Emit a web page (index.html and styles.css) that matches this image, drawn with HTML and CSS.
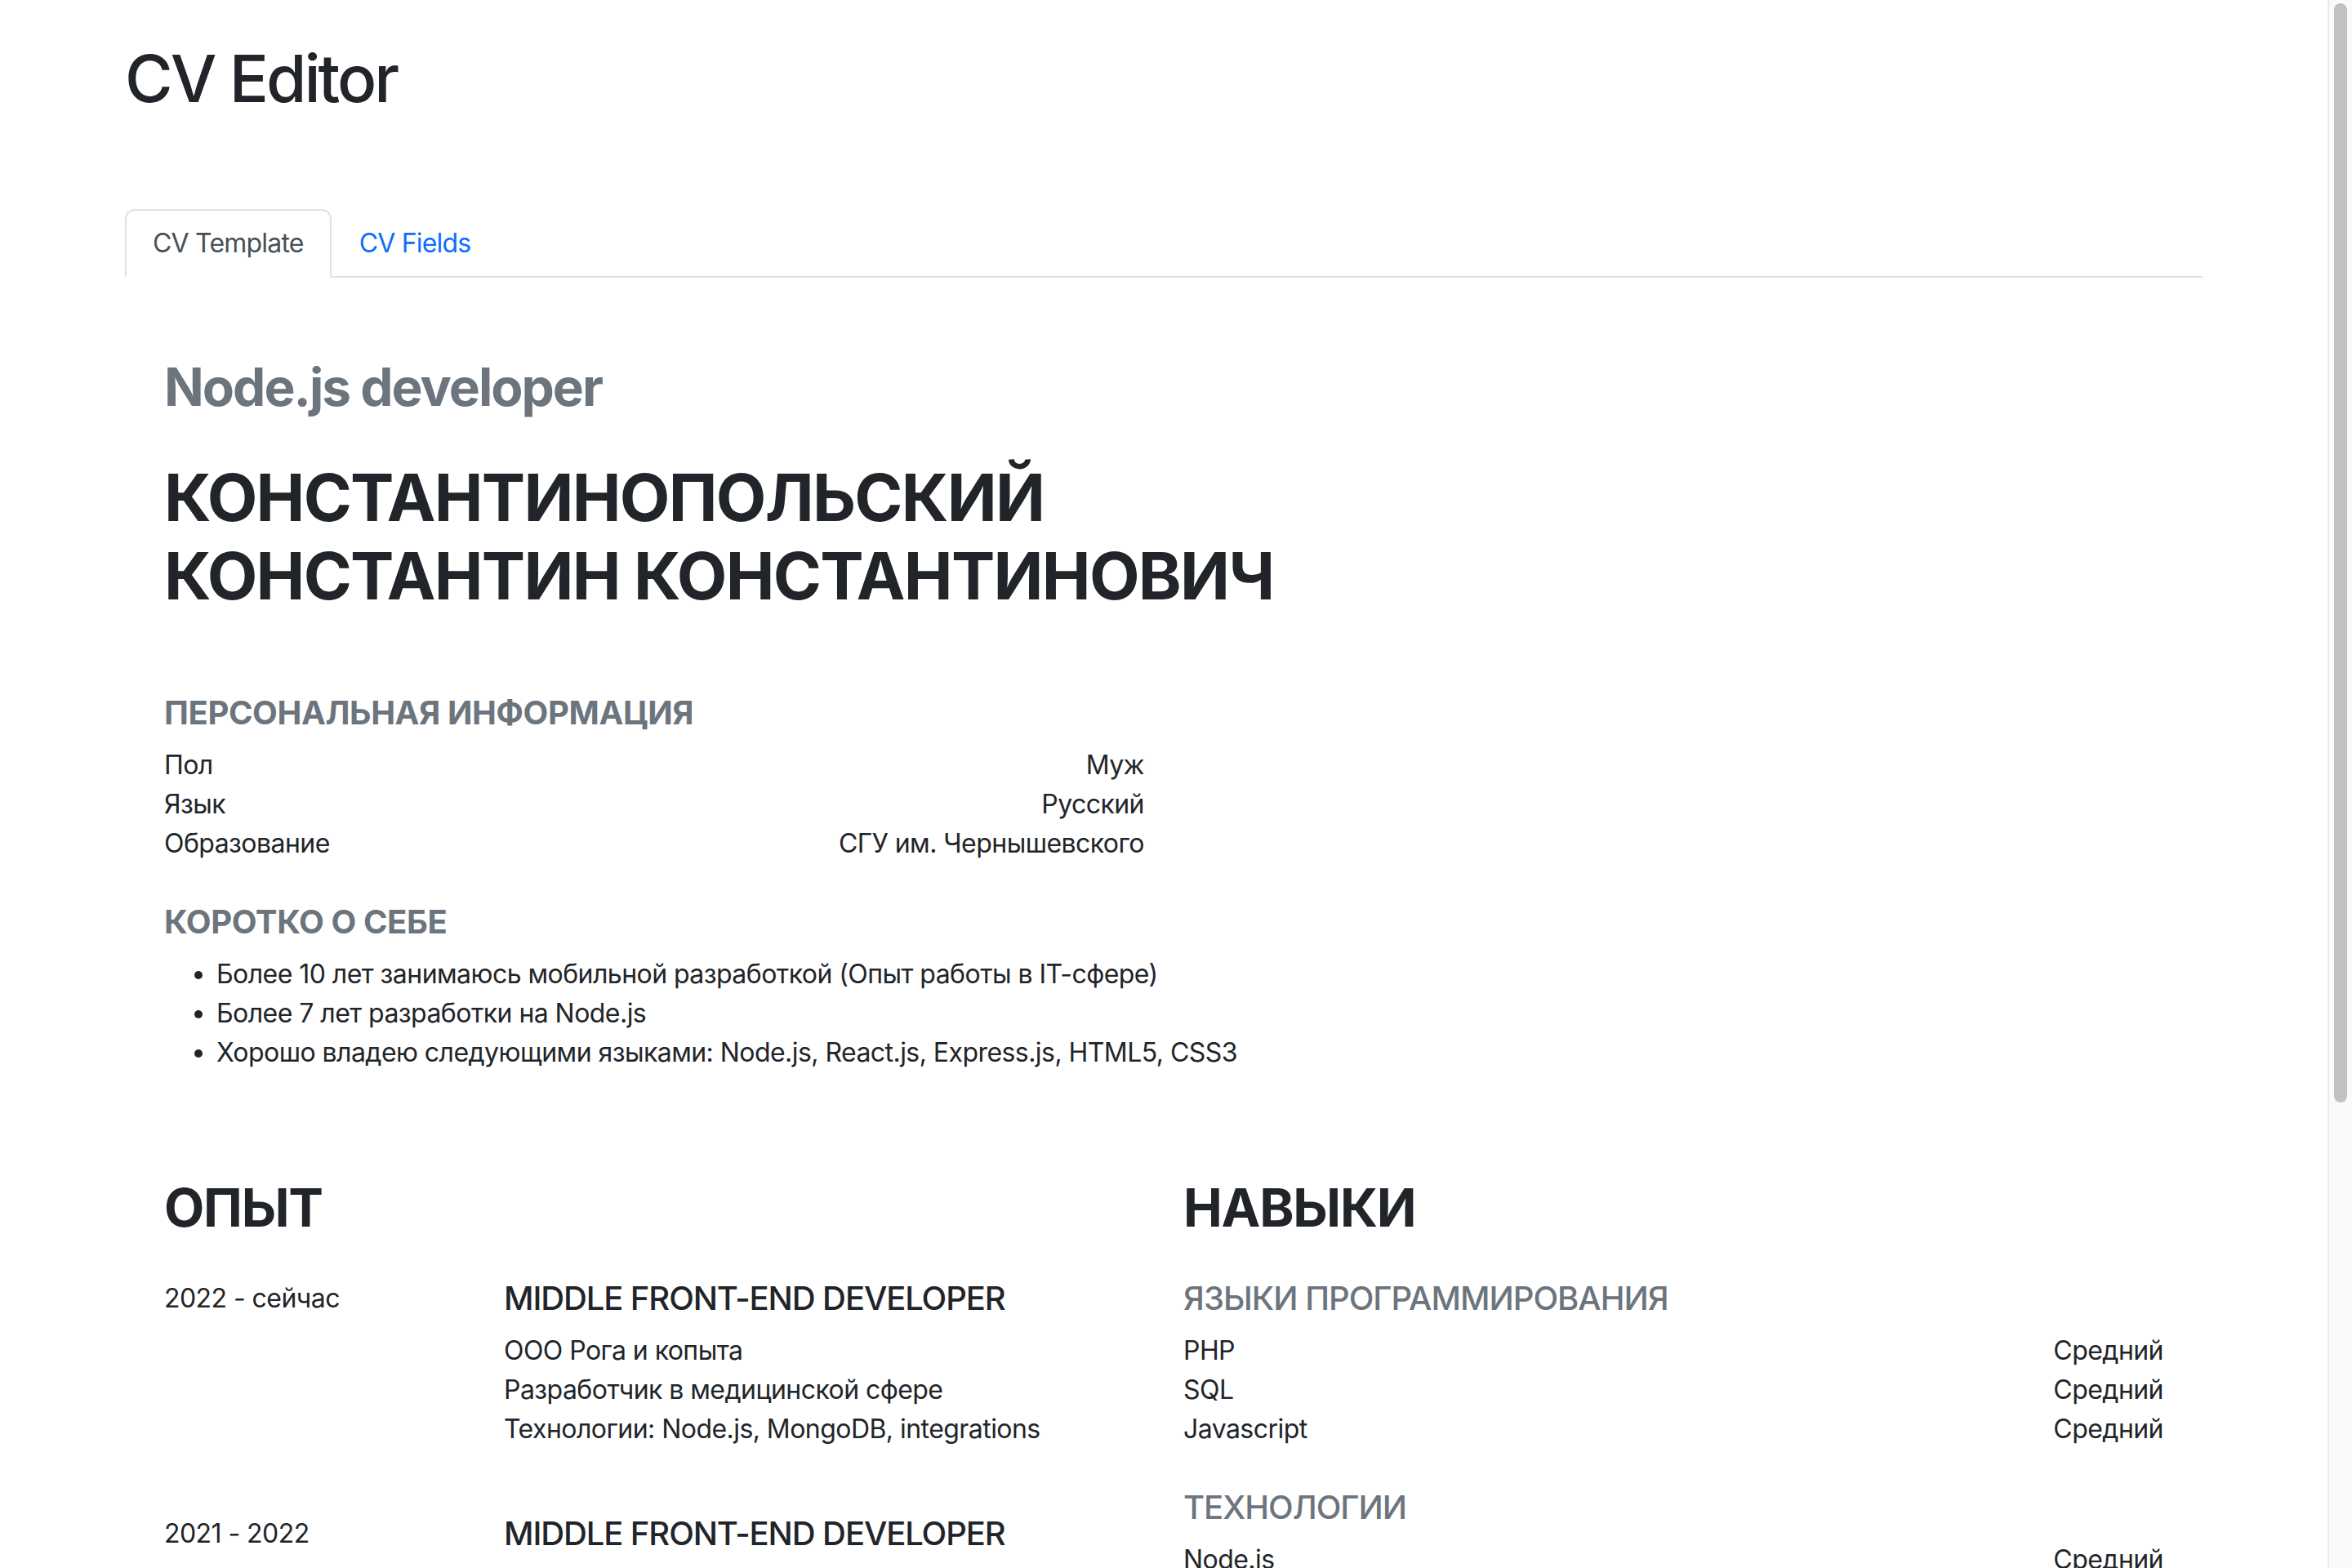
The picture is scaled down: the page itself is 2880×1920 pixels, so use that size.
FILE: index.html
```html
<!DOCTYPE html>
<html lang="ru">
<head>
<meta charset="utf-8">
<title>CV Editor</title>
<link rel="stylesheet" href="styles.css">
</head>
<body>
<div class="container">
  <h1 class="app-title">CV Editor</h1>
  <ul class="nav-tabs">
    <li><a class="nav-link active" href="#">CV Template</a></li>
    <li><a class="nav-link" href="#">CV Fields</a></li>
  </ul>
  <div class="cv">
    <h2 class="cv-position">Node.js developer</h2>
    <h1 class="cv-name">КОНСТАНТИНОПОЛЬСКИЙ<br>КОНСТАНТИН КОНСТАНТИНОВИЧ</h1>

    <section class="cv-block">
      <h5 class="block-title">ПЕРСОНАЛЬНАЯ ИНФОРМАЦИЯ</h5>
      <div class="info-table">
        <div class="info-row"><span>Пол</span><span>Муж</span></div>
        <div class="info-row"><span>Язык</span><span>Русский</span></div>
        <div class="info-row"><span>Образование</span><span>СГУ им. Чернышевского</span></div>
      </div>
    </section>

    <section class="cv-block">
      <h5 class="block-title">КОРОТКО О СЕБЕ</h5>
      <ul class="about-list">
        <li>Более 10 лет занимаюсь мобильной разработкой (Опыт работы в IT-сфере)</li>
        <li>Более 7 лет разработки на Node.js</li>
        <li>Хорошо владею следующими языками: Node.js, React.js, Express.js, HTML5, CSS3</li>
      </ul>
    </section>

    <div class="cv-columns">
      <div class="cv-col">
        <h2 class="col-title">ОПЫТ</h2>
        <div class="job">
          <div class="job-date">2022 - сейчас</div>
          <div class="job-body">
            <h5 class="job-title">MIDDLE FRONT-END DEVELOPER</h5>
            <div class="job-line">ООО Рога и копыта</div>
            <div class="job-line">Разработчик в медицинской сфере</div>
            <div class="job-line">Технологии: Node.js, MongoDB, integrations</div>
          </div>
        </div>
        <div class="job">
          <div class="job-date">2021 - 2022</div>
          <div class="job-body">
            <h5 class="job-title">MIDDLE FRONT-END DEVELOPER</h5>
            <div class="job-line">ООО Рога и копыта</div>
            <div class="job-line">Разработчик в финансовой сфере</div>
            <div class="job-line">Технологии: Node.js, PostgreSQL, React.js</div>
          </div>
        </div>
        <div class="job">
          <div class="job-date">2018 - 2021</div>
          <div class="job-body">
            <h5 class="job-title">JUNIOR FRONT-END DEVELOPER</h5>
            <div class="job-line">ООО Рога и копыта</div>
            <div class="job-line">Разработчик интернет-магазинов</div>
            <div class="job-line">Технологии: Node.js, Express.js, MySQL</div>
          </div>
        </div>
        <div class="job">
          <div class="job-date">2013 - 2018</div>
          <div class="job-body">
            <h5 class="job-title">MOBILE DEVELOPER</h5>
            <div class="job-line">ООО Рога и копыта</div>
            <div class="job-line">Разработка мобильных приложений</div>
            <div class="job-line">Технологии: Javascript, HTML5, CSS3</div>
          </div>
        </div>
      </div>
      <div class="cv-col">
        <h2 class="col-title">НАВЫКИ</h2>
        <div class="skill-group">
          <h5 class="skill-title">ЯЗЫКИ ПРОГРАММИРОВАНИЯ</h5>
          <div class="skill-row"><span>PHP</span><span>Средний</span></div>
          <div class="skill-row"><span>SQL</span><span>Средний</span></div>
          <div class="skill-row"><span>Javascript</span><span>Средний</span></div>
        </div>
        <div class="skill-group">
          <h5 class="skill-title">ТЕХНОЛОГИИ</h5>
          <div class="skill-row"><span>Node.js</span><span>Средний</span></div>
          <div class="skill-row"><span>React.js</span><span>Средний</span></div>
          <div class="skill-row"><span>Express.js</span><span>Средний</span></div>
          <div class="skill-row"><span>MongoDB</span><span>Средний</span></div>
        </div>
        <div class="skill-group">
          <h5 class="skill-title">ИНСТРУМЕНТЫ</h5>
          <div class="skill-row"><span>Git</span><span>Средний</span></div>
          <div class="skill-row"><span>Docker</span><span>Средний</span></div>
          <div class="skill-row"><span>Webpack</span><span>Средний</span></div>
        </div>
      </div>
    </div>
  </div>
</div>
<div class="scrollbar" aria-hidden="true"><div class="scrollbar-thumb"></div></div>
</body>
</html>
```
FILE: styles.css
```css
html {
  background: #fff;
  scrollbar-width: none;
}
body {
  margin: 0;
  padding-right: 30px;
  font-family: Inter, "Noto Sans", "Liberation Sans", sans-serif;
  font-size: 32px;
  line-height: 1.5;
  letter-spacing: -0.55px;
  color: #212529;
  background: #fff;
}
.scrollbar {
  position: fixed;
  top: 0;
  right: 0;
  box-sizing: border-box;
  width: 30px;
  height: 100vh;
  background: #fafafa;
  border-left: 2px solid #e8e8e8;
  padding: 4px 6px 0 6px;
}
.scrollbar-thumb {
  height: 1346px;
  border-radius: 8px;
  background: #c1c1c1;
}
.container {
  box-sizing: border-box;
  max-width: 2640px;
  margin: 0 auto;
  padding: 48px 48px 96px;
}
h1, h2, h5 {
  margin: 0;
}
.app-title {
  font-size: 80px;
  font-weight: 500;
  line-height: 1.2;
  letter-spacing: -3px;
  margin-bottom: 112px;
}
.nav-tabs {
  display: flex;
  list-style: none;
  margin: 0;
  padding: 0;
  border-bottom: 2px solid #dee2e6;
}
.nav-link {
  display: block;
  padding: 16px 32px;
  margin-bottom: -2px;
  border: 2px solid transparent;
  border-radius: 12px 12px 0 0;
  color: #0d6efd;
  text-decoration: none;
  line-height: 48px;
  letter-spacing: -0.8px;
}
.nav-link.active {
  color: #495057;
  background: #fff;
  border-color: #dee2e6 #dee2e6 #fff;
}
.cv {
  padding: 96px 48px 0;
}
.cv-position {
  font-size: 64px;
  font-weight: 700;
  line-height: 1.2;
  letter-spacing: -2px;
  color: #6c757d;
  margin-bottom: 48px;
}
.cv-name {
  font-size: 80px;
  font-weight: 700;
  line-height: 1.2;
  letter-spacing: -1.7px;
  margin-bottom: 96px;
}
.cv-block {
  margin-bottom: 48px;
}
.block-title {
  font-size: 40px;
  font-weight: 700;
  line-height: 1.2;
  letter-spacing: -0.4px;
  color: #6c757d;
  margin-bottom: 16px;
}
.info-table {
  width: 1200px;
}
.info-row,
.skill-row {
  display: flex;
  justify-content: space-between;
}
.about-list {
  margin: 0;
  padding-left: 64px;
}
.cv-columns {
  display: grid;
  grid-template-columns: 1fr 1fr;
  column-gap: 48px;
  margin-top: 128px;
}
.col-title {
  font-size: 64px;
  font-weight: 700;
  line-height: 1.2;
  letter-spacing: -1.2px;
  margin-bottom: 48px;
}
.job {
  display: grid;
  grid-template-columns: 416px 1fr;
  margin-bottom: 80px;
}
.job-title {
  font-size: 40px;
  font-weight: 500;
  line-height: 1.2;
  letter-spacing: -1.1px;
  margin-bottom: 16px;
}
.skill-group {
  margin-bottom: 48px;
}
.skill-title {
  font-size: 40px;
  font-weight: 500;
  line-height: 1.2;
  letter-spacing: -1px;
  color: #6c757d;
  margin-bottom: 16px;
}
```
